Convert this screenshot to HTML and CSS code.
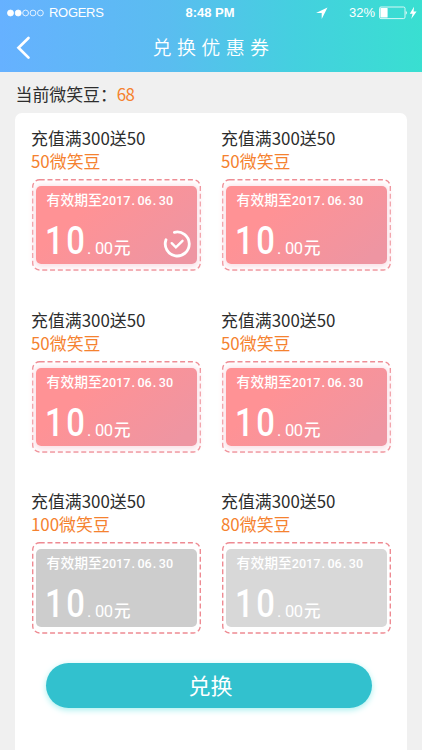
FILE: index.html
```
<!DOCTYPE html>
<html lang="zh-CN">
<head>
<meta charset="utf-8">
<title>兑换优惠券</title>
<link rel="stylesheet" href="styles.css">
</head>
<body>
<header class="header">
  <div class="status">
    <div class="carrier">
      <svg width="38" height="8" viewBox="0 0 38 8" fill="none" stroke="#fff" stroke-width=".8"><circle cx="3.5" cy="4" r="3" fill="#fff"/><circle cx="11.2" cy="4" r="3" fill="#fff"/><circle cx="18.6" cy="4" r="2.9"/><circle cx="26" cy="4" r="2.9"/><circle cx="33.4" cy="4" r="2.9"/></svg>
      <span>ROGERS</span>
    </div>
    <div class="time">8:48 PM</div>
    <div class="power">
      <svg class="locate" width="12" height="12" viewBox="0 0 12 12"><path d="M11.5.5 0 6h5.7v6z" fill="#fff"/></svg>
      <span>32%</span>
      <svg class="battery" width="38" height="14" viewBox="0 0 38 14"><rect x=".5" y="1" width="25.5" height="11.6" rx="1.5" fill="none" stroke="#fff" stroke-width=".8"/><rect x="1.4" y="2" width="7.2" height="9.6" rx=".6" fill="#fff"/><path d="M26.8 4.7q2 2 0 4.2zM35 .7 30.8 7.7h2.8l-1.4 5.3 5.4-7.4h-3z" fill="#fff"/></svg>
    </div>
  </div>
  <div class="nav">
    <svg class="back" width="15" height="24" viewBox="0 0 15 24"><path d="M12.5 2 2.5 11.8l10 9.8" fill="none" stroke="#fff" stroke-width="2.7" stroke-linecap="round"/></svg>
    <h1>兑换优惠券</h1>
  </div>
</header>
<p class="balance">当前微笑豆：<b>68</b></p>
<main class="panel">
  <section class="coupons">
    <article class="coupon">
      <h2>充值满300送50</h2><p class="cost">50微笑豆</p>
      <div class="frame"><svg class="dash" width="169" height="92"><rect x=".7" y=".7" width="167.6" height="90.3" rx="7"/></svg>
        <div class="ticket"><p class="date">有效期至<span>2017<i>.</i>06<i>.</i>30</span></p><p class="price"><b>10</b><span><i>.</i>00</span>元</p>
          <svg class="check" width="28" height="28" viewBox="0 0 28 28" fill="none" stroke="#fff"><path d="M3 9.8A12 12 0 1 0 11.4 2.3" stroke-width="2.8" stroke-linecap="round"/><path d="m8.7 13.2 4.2 4.2 6.6-6.6" stroke-width="2.4" stroke-linecap="round"/></svg></div></div>
    </article>
    <article class="coupon">
      <h2>充值满300送50</h2><p class="cost">50微笑豆</p>
      <div class="frame"><svg class="dash" width="169" height="92"><rect x=".7" y=".7" width="167.6" height="90.3" rx="7"/></svg>
        <div class="ticket"><p class="date">有效期至<span>2017<i>.</i>06<i>.</i>30</span></p><p class="price"><b>10</b><span><i>.</i>00</span>元</p></div></div>
    </article>
    <article class="coupon">
      <h2>充值满300送50</h2><p class="cost">50微笑豆</p>
      <div class="frame"><svg class="dash" width="169" height="92"><rect x=".7" y=".7" width="167.6" height="90.3" rx="7"/></svg>
        <div class="ticket"><p class="date">有效期至<span>2017<i>.</i>06<i>.</i>30</span></p><p class="price"><b>10</b><span><i>.</i>00</span>元</p></div></div>
    </article>
    <article class="coupon">
      <h2>充值满300送50</h2><p class="cost">50微笑豆</p>
      <div class="frame"><svg class="dash" width="169" height="92"><rect x=".7" y=".7" width="167.6" height="90.3" rx="7"/></svg>
        <div class="ticket"><p class="date">有效期至<span>2017<i>.</i>06<i>.</i>30</span></p><p class="price"><b>10</b><span><i>.</i>00</span>元</p></div></div>
    </article>
    <article class="coupon">
      <h2>充值满300送50</h2><p class="cost">100微笑豆</p>
      <div class="frame"><svg class="dash" width="169" height="92"><rect x=".7" y=".7" width="167.6" height="90.3" rx="7"/></svg>
        <div class="ticket off"><p class="date">有效期至<span>2017<i>.</i>06<i>.</i>30</span></p><p class="price"><b>10</b><span><i>.</i>00</span>元</p></div></div>
    </article>
    <article class="coupon">
      <h2>充值满300送50</h2><p class="cost">80微笑豆</p>
      <div class="frame"><svg class="dash" width="169" height="92"><rect x=".7" y=".7" width="167.6" height="90.3" rx="7"/></svg>
        <div class="ticket off light"><p class="date">有效期至<span>2017<i>.</i>06<i>.</i>30</span></p><p class="price"><b>10</b><span><i>.</i>00</span>元</p></div></div>
    </article>
  </section>
  <button class="redeem" type="button">兑换</button>
</main>
</body>
</html>
```
FILE: styles.css
```
* { box-sizing: border-box; margin: 0; padding: 0; }
body {
  width: 422px; height: 750px; overflow: hidden;
  display: flex; flex-direction: column;
  background: #f0f0f0; color: #2d2d2d;
  font-family: "Noto Sans CJK SC", sans-serif;
}
svg { display: block; flex: none; }
i { font-style: normal; }
.header {
  height: 71.5px; flex: none; color: #fff;
  background: linear-gradient(90deg, #66b1ff 0%, #5abdf0 40%, #44d0df 70%, #39dfd1 100%);
}
.status {
  display: grid; grid-template-columns: 1fr auto 1fr; align-items: center;
  height: 25px; padding: 0 5px 0 7px;
  font: 13px/24px "Liberation Sans", sans-serif;
}
.carrier, .power { display: flex; align-items: center; }
.carrier { gap: 4px; letter-spacing: -.3px; }
.time { font-weight: bold; font-size: 13px; padding-right: 4px; }
.power { justify-content: flex-end; }
.locate { margin-right: 21px; }
.battery { margin-left: 4px; }
.nav {
  display: grid; grid-template-columns: 15px 1fr 15px; align-items: center;
  height: 45px; padding: 0 16px;
}
.nav h1 {
  font-size: 19px; font-weight: 350; line-height: 43px; height: 45px;
  letter-spacing: 5.4px; text-align: center; padding-left: 5px;
}
.balance { height: 41.5px; flex: none; padding-left: 15.5px; font-size: 16.9px; line-height: 43px; }
.balance b { font-weight: 400; color: #f5822f; letter-spacing: -.7px; }
.panel {
  flex: 1; margin: 0 15px; padding: 14px 16px 0;
  background: #fff; border-radius: 7px 7px 0 0;
}
.coupons { display: grid; grid-template-columns: 169px 169px; column-gap: 21px; grid-template-rows: 182px 180.5px 122px; }
.coupon h2 { font-size: 16.9px; font-weight: 400; line-height: 22px; }
.cost { margin-top: 1px; font-size: 16.9px; line-height: 22px; color: #f5822f; }
.frame { position: relative; margin: 7px 0 0 1px; width: 169px; height: 92px; padding: 7px 4px; }
.dash { position: absolute; inset: 0; }
.dash rect { fill: none; stroke: #ee8a92; stroke-width: 1.4; stroke-dasharray: 5 2.8; }
.ticket {
  position: relative; height: 78px; padding: 4px 10px; border-radius: 5px;
  color: #fff; background: linear-gradient(140deg, #ff9295 30%, #ee95a2 90%);
  box-shadow: 0 1px 6px 2px #fadfe6;
}
.ticket.off { background: #cdcdcd; box-shadow: none; }
.ticket.light { background: #d8d8d8; }
.date { padding-left: .6px; font-size: 13.8px; line-height: 19px; height: 19px; font-weight: 500; white-space: nowrap; }
.date span { font: 500 12.6px/19px Roboto, sans-serif; }
.date i { display: inline-block; width: 7px; padding-left: 1px; }
.price { display: flex; align-items: baseline; padding-top: 5px; font-size: 16.5px; line-height: 55px; font-weight: 500; white-space: nowrap; }
.price b {
  width: 41px; margin-left: -1px; font: 500 39px/55px Roboto, sans-serif;
  letter-spacing: 3px; transform: scaleX(.84); transform-origin: left;
}
.price span { display: flex; width: 28px; font: 400 16.5px/55px Roboto, sans-serif; letter-spacing: -.5px; }
.price i { width: 9px; padding-left: 1px; }
.check { position: absolute; right: 6.5px; bottom: 6px; }
.redeem {
  display: block; width: 326px; height: 45px; margin: 51.5px 0 0 15px;
  border: 0; border-radius: 23px; color: #fff; background: #32c1ce;
  font: 22px/41px "Noto Sans CJK SC", sans-serif; padding: 0 0 3px 3px;
  box-shadow: 0 2px 6px #a8f0ef;
}
```
